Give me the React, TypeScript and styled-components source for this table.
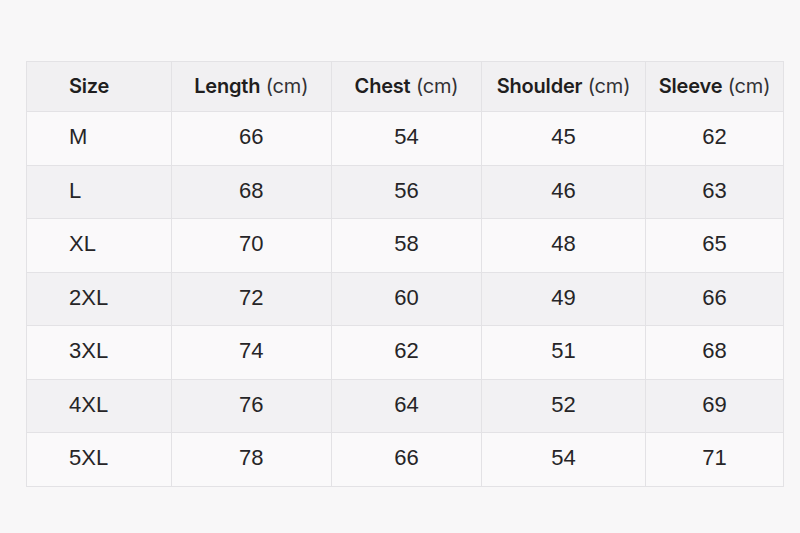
import React from "react";
import styled, { createGlobalStyle } from "styled-components";

const Global = createGlobalStyle`
  html, body { margin: 0; padding: 0; background: #f8f7f8; }
  body { font-family: "Liberation Sans", Arial, sans-serif; color: #232224; }
`;

const Page = styled.div`
  width: 800px;
  height: 533px;
  box-sizing: border-box;
  padding: 61px 0 0 26px;
  background: #f8f7f8;
`;

const Table = styled.table`
  border-collapse: collapse;
  table-layout: fixed;
  width: 757px;
  background: #faf9fa;
`;

const HeadRow = styled.tr`
  height: 50px;
`;

const HeadCell = styled.th<{ $left?: boolean }>`
  padding: 0 0 1px;
  padding-left: ${(p) => (p.$left ? "42px" : "0")};
  text-align: ${(p) => (p.$left ? "left" : "center")};
  background: #f1f0f2;
  border: 1px solid #e3e2e5;
  font-family: "Inter", "Liberation Sans", sans-serif;
  font-weight: 600;
  font-size: 20px;
  line-height: 1;
  letter-spacing: -0.2px;
  color: #1f1e20;
  white-space: nowrap;
`;

const Unit = styled.span`
  font-weight: 400;
  color: #333235;
`;

const Row = styled.tr<{ $alt: boolean }>`
  height: 53.5px;
  background: ${(p) => (p.$alt ? "#f2f1f3" : "#faf9fa")};
`;

const Cell = styled.td<{ $left?: boolean }>`
  padding: 0 0 2px;
  padding-left: ${(p) => (p.$left ? "42px" : "0")};
  text-align: ${(p) => (p.$left ? "left" : "center")};
  border: 1px solid #e3e2e5;
  font-size: 22px;
  line-height: 1;
  color: #262527;
`;

const widths = [144.5, 160.5, 150, 164, 138];
const headers: [string, string | null][] = [
  ["Size", null],
  ["Length", "(cm)"],
  ["Chest", "(cm)"],
  ["Shoulder", "(cm)"],
  ["Sleeve", "(cm)"],
];
const rows = [
  ["M", "66", "54", "45", "62"],
  ["L", "68", "56", "46", "63"],
  ["XL", "70", "58", "48", "65"],
  ["2XL", "72", "60", "49", "66"],
  ["3XL", "74", "62", "51", "68"],
  ["4XL", "76", "64", "52", "69"],
  ["5XL", "78", "66", "54", "71"],
];

export default function App() {
  return (
    <>
      <Global />
      <Page>
        <Table>
          <colgroup>
            {widths.map((w, i) => (
              <col key={i} style={{ width: w }} />
            ))}
          </colgroup>
          <thead>
            <HeadRow>
              {headers.map(([h, u], i) => (
                <HeadCell key={h} $left={i === 0}>
                  {h}
                  {u && <Unit> {u}</Unit>}
                </HeadCell>
              ))}
            </HeadRow>
          </thead>
          <tbody>
            {rows.map((r, ri) => (
              <Row key={r[0]} $alt={ri % 2 === 1}>
                {r.map((c, ci) => (
                  <Cell key={ci} $left={ci === 0}>
                    {c}
                  </Cell>
                ))}
              </Row>
            ))}
          </tbody>
        </Table>
      </Page>
    </>
  );
}
